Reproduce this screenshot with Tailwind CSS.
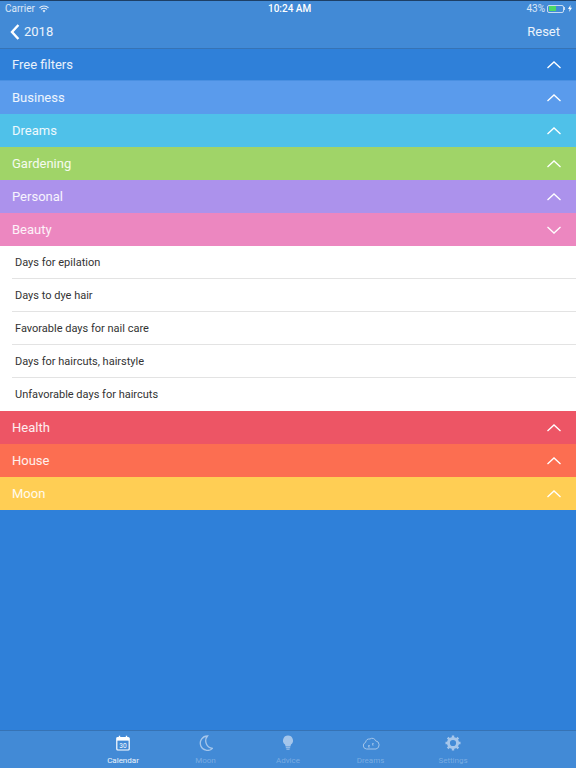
<!DOCTYPE html>
<html lang="en">
<head>
    <meta charset="UTF-8">
    <meta name="viewport" content="width=device-width, initial-scale=1.0">
    <title>Filters</title>
    <script src="https://cdn.jsdelivr.net/npm/@tailwindcss/browser@4"></script>
</head>
<body class="bg-[#2f80d9] font-['Roboto','Liberation_Sans',sans-serif]">
<div class="w-[576px] h-[768px] flex flex-col overflow-hidden">
    <!-- status bar + nav -->
    <div class="h-[49px] bg-[#428ad6] border-b border-[#3673b5] border-t border-t-[#1d3f66] text-white shrink-0">
        <div class="h-[15px] relative flex items-center justify-between pl-[5px] pr-[4px] text-[10px] text-white/80">
            <div class="flex items-center gap-[4px]">
                <span>Carrier</span>
                <svg width="10" height="8" viewBox="0 0 11 8"><path d="M0.5 2.8 A7 7 0 0 1 10.5 2.8 M2.2 4.5 A4.6 4.6 0 0 1 8.8 4.5" fill="none" stroke="#e2ecf8" stroke-width="1.2"/><path d="M3.9 6 A2.2 2.2 0 0 1 7.1 6 L5.5 7.8 Z" fill="#e2ecf8"/></svg>
            </div>
            <span class="absolute left-[268px] top-0 leading-[15px] text-white font-medium">10:24 AM</span>
            <div class="flex items-center gap-[2px]">
                <span>43%</span>
                <div class="w-[17px] h-[8px] border border-white/70 rounded-[2px] p-[0.5px]"><div class="w-[7px] h-full bg-[#4cd964]"></div></div>
                <div class="w-[1px] h-[3px] bg-white/70 -ml-[2px]"></div>
                <svg width="4" height="7" viewBox="0 0 4 7" class="ml-[1px]"><path d="M2.6 0 L0 4 H1.6 L1.2 7 L4 2.8 H2.3 Z" fill="#fff"/></svg>
            </div>
        </div>
        <div class="h-[31px] flex items-center justify-between pl-[10px] pr-[16px] pt-[1px]">
            <div class="flex items-center gap-[4px]">
                <svg width="10" height="16" viewBox="0 0 10 16"><path d="M8.4 1 L2 8 L8.4 15" fill="none" stroke="#fff" stroke-width="2.4"/></svg>
                <span class="text-[13px] text-white/90">2018</span>
            </div>
            <span class="text-[13px] text-white/90">Reset</span>
        </div>
    </div>

    <!-- filter groups -->
    <div class="flex flex-col shrink-0 text-white/90 text-[13px]">
        <div class="h-[32px] bg-[#2f80d9] flex items-center justify-between pl-[12px] pr-[15px] pt-[1px] border-b border-[#4a90e2]">
            <span>Free filters</span>
            <svg width="14" height="8" viewBox="0 0 14 8"><path d="M0.5 7 L7 1 L13.5 7" fill="none" stroke="#fff" stroke-width="1.3"/></svg>
        </div>
        <div class="h-[33px] bg-[#5a9bec] flex items-center justify-between pl-[12px] pr-[15px] pt-[1px]">
            <span>Business</span>
            <svg width="14" height="8" viewBox="0 0 14 8"><path d="M0.5 7 L7 1 L13.5 7" fill="none" stroke="#fff" stroke-width="1.3"/></svg>
        </div>
        <div class="h-[33px] bg-[#4fc1e9] flex items-center justify-between pl-[12px] pr-[15px] pt-[1px]">
            <span>Dreams</span>
            <svg width="14" height="8" viewBox="0 0 14 8"><path d="M0.5 7 L7 1 L13.5 7" fill="none" stroke="#fff" stroke-width="1.3"/></svg>
        </div>
        <div class="h-[33px] bg-[#a0d468] flex items-center justify-between pl-[12px] pr-[15px] pt-[1px]">
            <span>Gardening</span>
            <svg width="14" height="8" viewBox="0 0 14 8"><path d="M0.5 7 L7 1 L13.5 7" fill="none" stroke="#fff" stroke-width="1.3"/></svg>
        </div>
        <div class="h-[33px] bg-[#ac92ec] flex items-center justify-between pl-[12px] pr-[15px] pt-[1px]">
            <span>Personal</span>
            <svg width="14" height="8" viewBox="0 0 14 8"><path d="M0.5 7 L7 1 L13.5 7" fill="none" stroke="#fff" stroke-width="1.3"/></svg>
        </div>
        <div class="h-[33px] bg-[#ec87c0] flex items-center justify-between pl-[12px] pr-[15px] pt-[1px]">
            <span>Beauty</span>
            <svg width="14" height="8" viewBox="0 0 14 8"><path d="M0.5 1 L7 7 L13.5 1" fill="none" stroke="#fff" stroke-width="1.3"/></svg>
        </div>

        <div class="bg-white text-[#333] text-[11px]">
            <div class="h-[33px] ml-[12px] pl-[3px] pt-[3px] flex items-center border-b border-[#e3e3e3]">Days for epilation</div>
            <div class="h-[33px] ml-[12px] pl-[3px] pt-[3px] flex items-center border-b border-[#e3e3e3]">Days to dye hair</div>
            <div class="h-[33px] ml-[12px] pl-[3px] pt-[3px] flex items-center border-b border-[#e3e3e3]">Favorable days for nail care</div>
            <div class="h-[33px] ml-[12px] pl-[3px] pt-[3px] flex items-center border-b border-[#e3e3e3]">Days for haircuts, hairstyle</div>
            <div class="h-[33px] ml-[12px] pl-[3px] pt-[2px] flex items-center">Unfavorable days for haircuts</div>
        </div>

        <div class="h-[33px] bg-[#ed5565] flex items-center justify-between pl-[12px] pr-[15px]">
            <span>Health</span>
            <svg width="14" height="8" viewBox="0 0 14 8"><path d="M0.5 7 L7 1 L13.5 7" fill="none" stroke="#fff" stroke-width="1.3"/></svg>
        </div>
        <div class="h-[33px] bg-[#fc6e51] flex items-center justify-between pl-[12px] pr-[15px]">
            <span>House</span>
            <svg width="14" height="8" viewBox="0 0 14 8"><path d="M0.5 7 L7 1 L13.5 7" fill="none" stroke="#fff" stroke-width="1.3"/></svg>
        </div>
        <div class="h-[33px] bg-[#ffce54] flex items-center justify-between pl-[12px] pr-[15px]">
            <span>Moon</span>
            <svg width="14" height="8" viewBox="0 0 14 8"><path d="M0.5 7 L7 1 L13.5 7" fill="none" stroke="#fff" stroke-width="1.3"/></svg>
        </div>
    </div>

    <div class="flex-1"></div>

    <!-- tab bar -->
    <div class="h-[38px] bg-[#428ad6] border-t border-[#3673b5] shrink-0 flex justify-center gap-[2px] text-[8px]">
        <div class="w-[80.5px] flex flex-col items-center pt-[4px] text-white/90">
            <svg width="14" height="16" viewBox="0 0 14 16"><rect x="0.8" y="2.5" width="12.4" height="12.5" rx="1" fill="none" stroke="#fff" stroke-width="1.2"/><path d="M0.8 3h12.4v2.6H0.8z" fill="#fff"/><path d="M3.5 0.8v3M10.5 0.8v3" stroke="#fff" stroke-width="1.4"/><text x="7" y="12.8" font-size="6.5" text-anchor="middle" fill="#fff">30</text></svg>
            <span class="mt-[4px] leading-[11px]">Calendar</span>
        </div>
        <div class="w-[80.5px] flex flex-col items-center pt-[4px] text-white/30">
            <svg width="14" height="16" viewBox="0 0 14 16"><path d="M8.5 1 A7.2 7.2 0 1 0 13.5 13.4 A7.6 7.6 0 0 1 8.5 1 Z" fill="none" stroke="#a5c6eb" stroke-width="1.3"/></svg>
            <span class="mt-[4px] leading-[11px]">Moon</span>
        </div>
        <div class="w-[80.5px] flex flex-col items-center pt-[4px] text-white/30">
            <svg width="12" height="16" viewBox="0 0 12 16"><path d="M6 0.5 A5 5 0 0 1 9 9.5 L8.4 11.5 H3.6 L3 9.5 A5 5 0 0 1 6 0.5 Z" fill="#a5c6eb"/><path d="M3.8 12.7h4.4M4.4 14.2h3.2" stroke="#a5c6eb" stroke-width="1"/></svg>
            <span class="mt-[4px] leading-[11px]">Advice</span>
        </div>
        <div class="w-[80.5px] flex flex-col items-center pt-[4px] text-white/30">
            <svg width="18" height="16" viewBox="0 0 18 16"><path d="M4.5 14 A3.4 3.4 0 0 1 3.6 7.4 A4 4 0 0 1 8 4 A3.6 3.6 0 0 1 13.6 5.8 A4.2 4.2 0 0 1 14 14 Z" fill="none" stroke="#a5c6eb" stroke-width="1"/><path d="M6 10.5h1.8L6 12h2M10 8.5h1.5L10 10h1.8" fill="none" stroke="#a5c6eb" stroke-width="0.7"/></svg>
            <span class="mt-[4px] leading-[11px]">Dreams</span>
        </div>
        <div class="w-[80.5px] flex flex-col items-center pt-[4px] text-white/30">
            <svg width="16" height="16" viewBox="0 0 16 16"><circle cx="8" cy="8" r="4.6" fill="none" stroke="#a5c6eb" stroke-width="3"/><path d="M8 0.5v3M8 12.5v3M0.5 8h3M12.5 8h3M2.7 2.7l2.1 2.1M11.2 11.2l2.1 2.1M13.3 2.7l-2.1 2.1M4.8 11.2l-2.1 2.1" stroke="#a5c6eb" stroke-width="2.4"/></svg>
            <span class="mt-[4px] leading-[11px]">Settings</span>
        </div>
    </div>
</div>
</body>
</html>
